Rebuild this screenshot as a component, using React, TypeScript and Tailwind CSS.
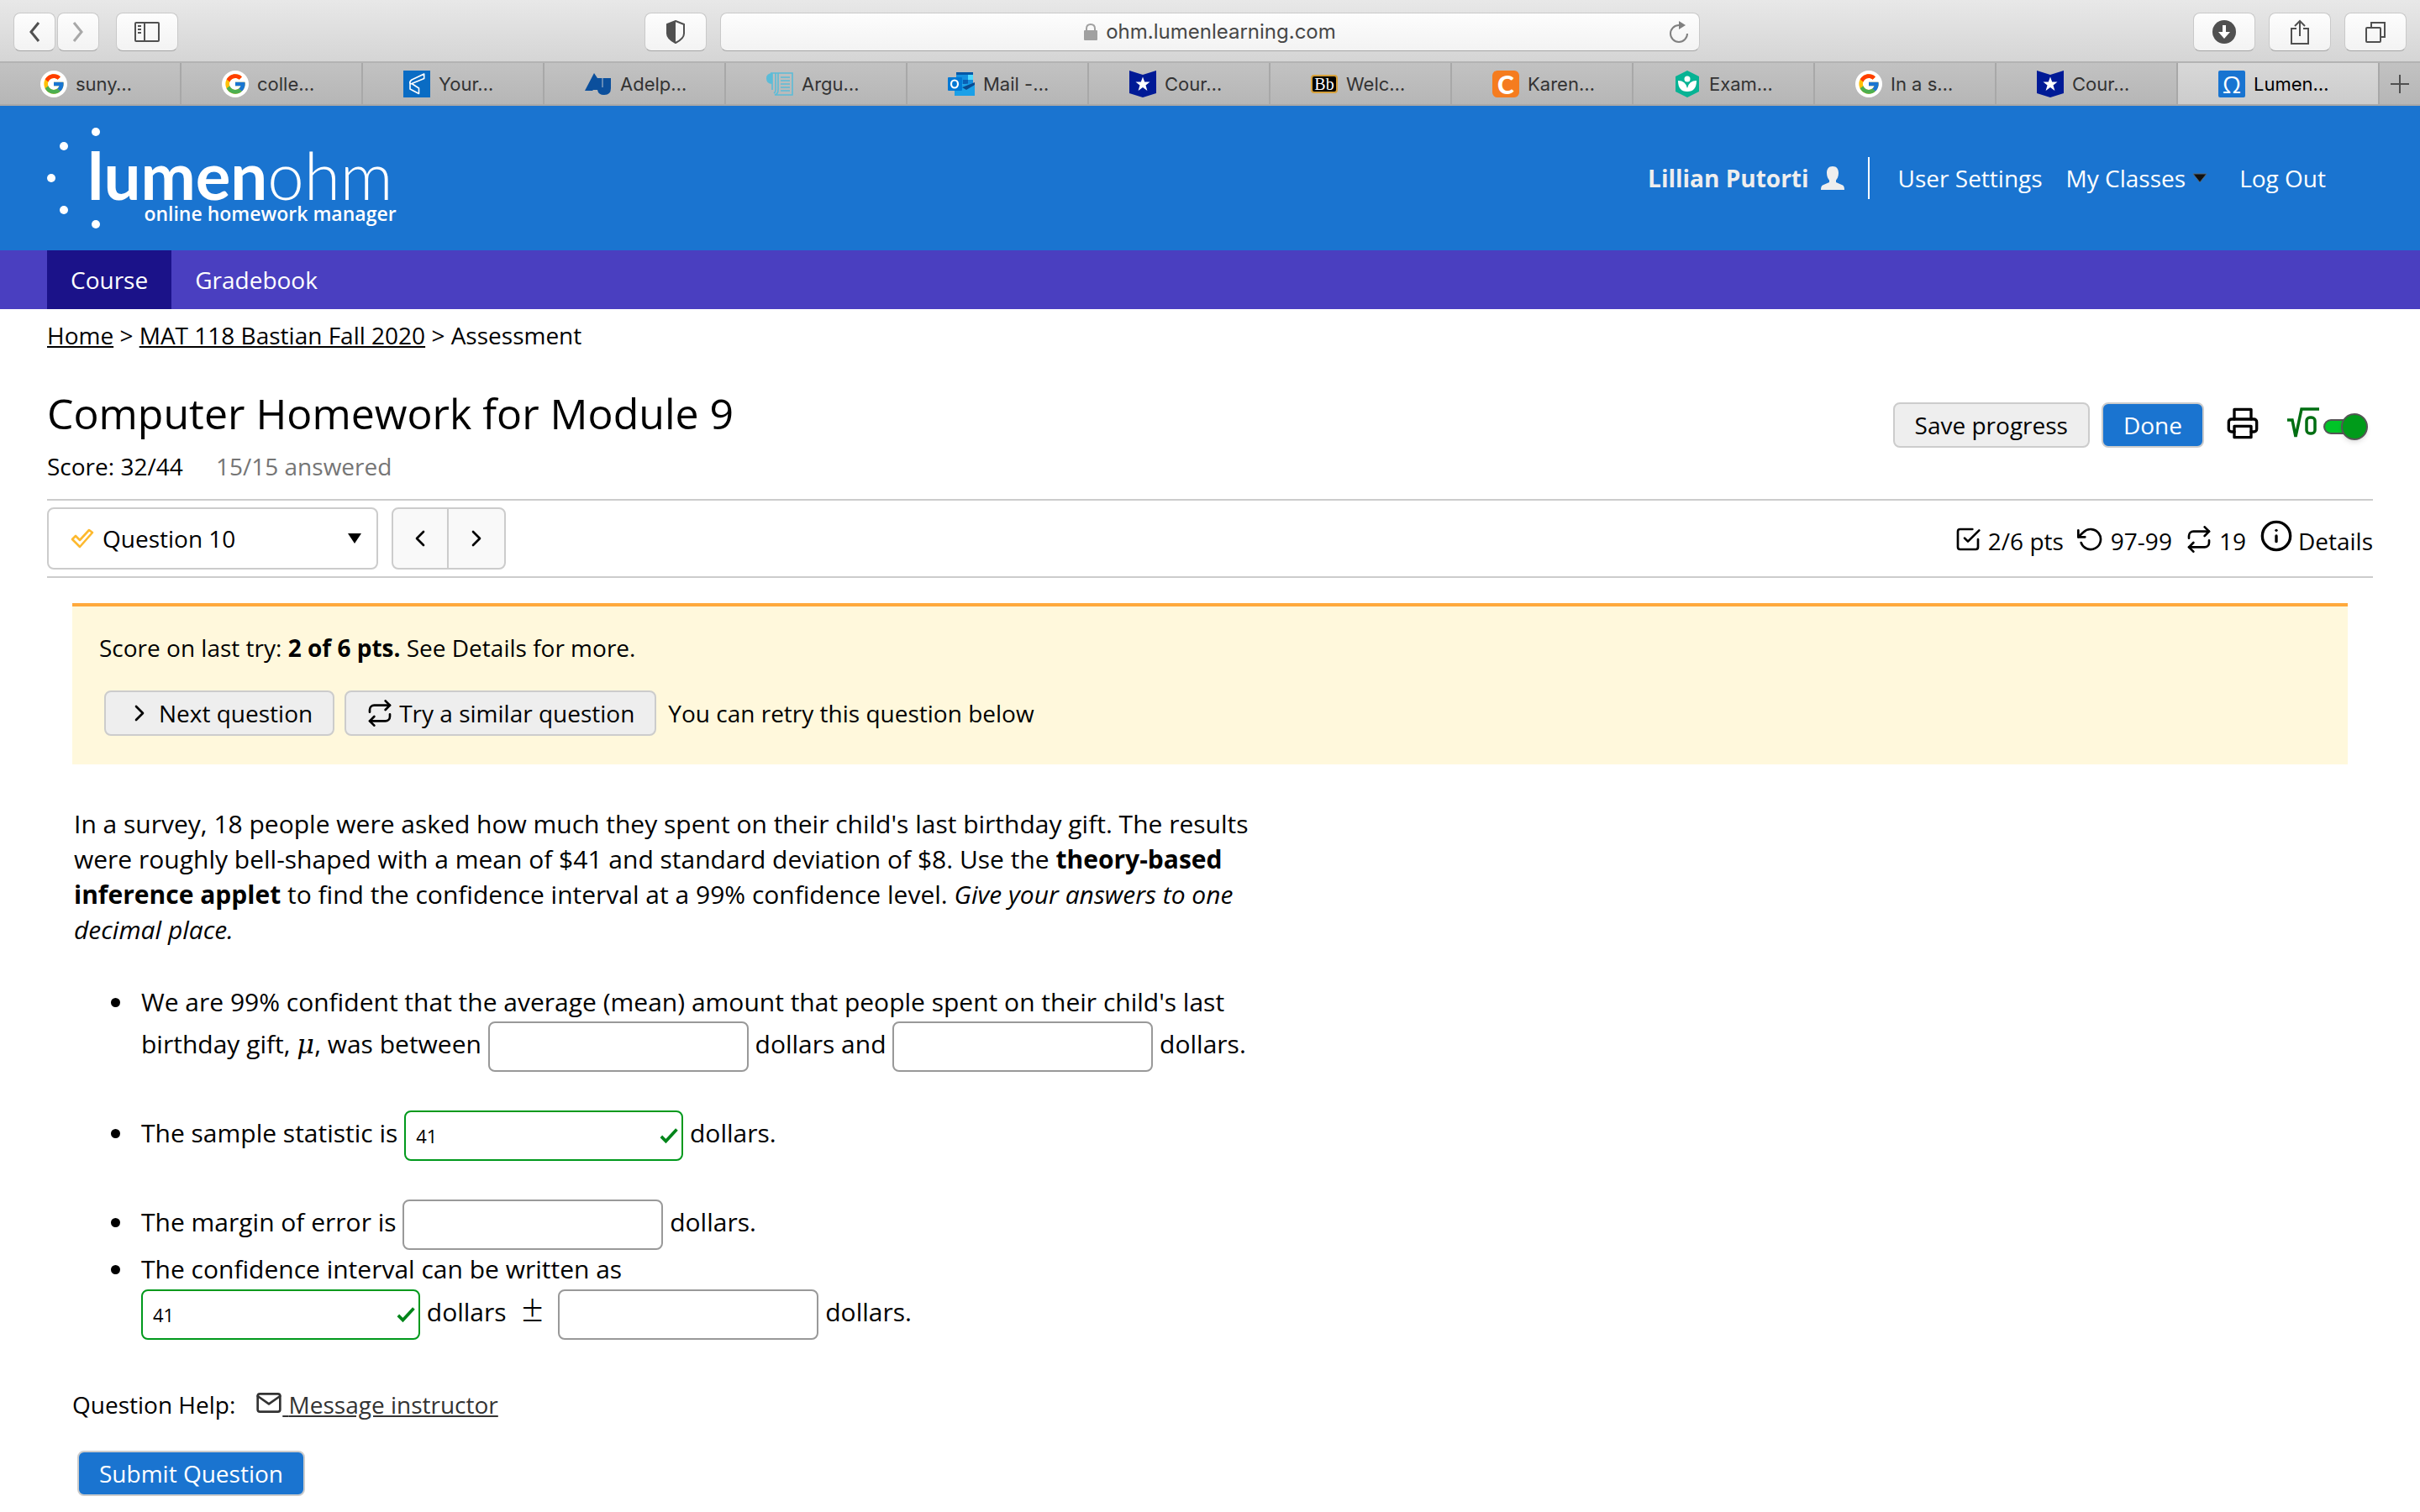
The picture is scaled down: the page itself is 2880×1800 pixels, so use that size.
import { FcGoogle } from 'react-icons/fc';
import {
    FiCheckSquare,
    FiChevronLeft,
    FiChevronRight,
    FiInfo,
    FiMail,
    FiPrinter,
    FiRepeat,
    FiRotateCcw,
} from 'react-icons/fi';

function GoogleIcon() {
    return (
        <span className="flex size-8 items-center justify-center rounded-full bg-white">
            <FcGoogle className="size-7" />
        </span>
    );
}

function RibbonIcon() {
    return (
        <svg viewBox="0 0 32 32" className="size-8">
            <path d="M0 0L16 5L32 0V27L16 32L0 27Z" fill="#001a96" />
            <path d="M16 7.500l2.200 6h6.300l-5 3.900 1.900 6.600-5.400-4-5.400 4 1.900-6.600-5-3.900h6.300z" fill="#fff" />
        </svg>
    );
}

function YourIcon() {
    return (
        <svg viewBox="0 0 32 32" className="size-8">
            <rect width="32" height="32" fill="#0a6cc4" />
            <path
                d="M24.700 4L10 11Q7 13 8 16V22L18.500 27.500V21L10 15.500L24.700 9.500ZM8 16L10 15.500"
                fill="none"
                stroke="#fff"
                strokeWidth="1.600"
                strokeLinejoin="round"
            />
        </svg>
    );
}

function AdelphiIcon() {
    return (
        <svg viewBox="0 0 32 32" className="size-8">
            <path d="M0 24L11 3l4 6h16v12q0 8-8 8-7 0-8-6h-5l-1 1z" fill="#0b4f9c" />
            <path d="M21 9v11" stroke="#b9c4d0" />
        </svg>
    );
}

function ScrollIcon() {
    return (
        <svg viewBox="0 0 32 32" className="size-8" fill="none" stroke="#5bbcd8" strokeWidth="1.600">
            <path d="M7 3Q0 3 0 9.500T7 16z" fill="#5bbcd8" stroke="none" />
            <path d="M5 3h26v26H10q4-1 4-6V3M7 3v20M11 3v20q0 3-2 4" />
            <path d="M17 8h11M17 12h11M17 16h11M17 20h11M17 24h11" />
        </svg>
    );
}

function OutlookIcon() {
    return (
        <svg viewBox="0 0 32 32" className="size-8">
            <path d="M10 2h20v14H10z" fill="#1490df" />
            <path d="M10 2h20v3H10z" fill="#0358a7" />
            <path d="M24 5h6v6h-6z" fill="#50d9ff" />
            <path d="M18 11h6v5h-6z" fill="#0a5fb4" />
            <path d="M8 17l24-2v15H8z" fill="#1aa0e8" />
            <path d="M17 20l15-6v3l-10 6z" fill="#0a4a8f" />
            <rect y="8" width="17" height="16" rx="1" fill="#0078d4" />
            <ellipse cx="8" cy="16" rx="4" ry="4.500" fill="none" stroke="#fff" strokeWidth="2.200" />
        </svg>
    );
}

function BlackboardIcon() {
    return (
        <span className="flex h-[22px] w-8 items-center justify-center rounded-sm border-2 border-[#d6a03a] bg-black font-['Liberation_Serif',serif] text-[20px] leading-none text-white">
            Bb
        </span>
    );
}

function CheggIcon() {
    return (
        <span className="flex size-8 items-center justify-center rounded-md bg-[#f57c1f] font-['Lato',sans-serif] text-[30px] leading-none font-black text-white">
            C
        </span>
    );
}

function ExamIcon() {
    return (
        <svg viewBox="0 0 32 32" className="size-8">
            <path d="M16 0l14 7v18l-14 7-14-7V7z" fill="#07b394" />
            <circle cx="16" cy="10" r="3.500" fill="#fff" />
            <path d="M5 12q9 0 11 9 2-9 11-9 0 13-11 13T5 12z" fill="#fff" />
        </svg>
    );
}

function OhmIcon() {
    return (
        <span className="flex size-8 items-center justify-center rounded-xs bg-[#1874d1] font-['Open_Sans',sans-serif] text-[28px] leading-none text-white">
            Ω
        </span>
    );
}

const tabs = [
    { label: 'suny…', icon: <GoogleIcon /> },
    { label: 'colle…', icon: <GoogleIcon /> },
    { label: 'Your…', icon: <YourIcon /> },
    { label: 'Adelp…', icon: <AdelphiIcon /> },
    { label: 'Argu…', icon: <ScrollIcon /> },
    { label: 'Mail -…', icon: <OutlookIcon /> },
    { label: 'Cour…', icon: <RibbonIcon /> },
    { label: 'Welc…', icon: <BlackboardIcon /> },
    { label: 'Karen…', icon: <CheggIcon /> },
    { label: 'Exam…', icon: <ExamIcon /> },
    { label: 'In a s…', icon: <GoogleIcon /> },
    { label: 'Cour…', icon: <RibbonIcon /> },
];

const toolButton =
    'flex h-[46px] items-center justify-center rounded-lg border border-[#c9c9c9] border-b-[#a5a5a5] bg-linear-to-b from-[#fdfdfd] to-[#f3f3f3] text-[#505050]';

function Toolbar() {
    return (
        <div className="grid h-[75px] grid-cols-[857fr_1166fr_857fr] items-center border-b-2 border-[#b3b3b3] bg-linear-to-b from-[#e8e8e8] to-[#d5d5d5] pt-0.5 font-['Inter',sans-serif]">
            <div className="flex items-center justify-between px-4">
                <div className="flex items-center">
                    <button aria-label="Back" className={`${toolButton} w-[50px]`}>
                        <svg viewBox="0 0 14 26" className="h-[26px] w-3.5" fill="none" stroke="currentColor" strokeWidth="3">
                            <path d="M12 2L3 13l9 11" />
                        </svg>
                    </button>
                    <button aria-label="Forward" className={`${toolButton} ml-0.5 w-[50px]`}>
                        <svg viewBox="0 0 14 26" className="h-[26px] w-3.5" fill="none" stroke="#a8a8a8" strokeWidth="3">
                            <path d="M2 2l9 11-9 11" />
                        </svg>
                    </button>
                    <button aria-label="Sidebar" className={`${toolButton} ml-5 w-[74px]`}>
                        <svg viewBox="0 0 30 26" className="h-[26px] w-[30px]" fill="none" stroke="currentColor" strokeWidth="2">
                            <rect x="1" y="2" width="28" height="22" rx="1" />
                            <path d="M12 2v22M4 6h4M4 10h4M4 14h4" />
                        </svg>
                    </button>
                </div>
                <button aria-label="Privacy report" className={`${toolButton} w-[74px]`}>
                    <svg viewBox="0 0 24 28" className="h-7 w-6">
                        <path d="M12 1l10 4v11q0 6-10 11Q2 22 2 16V5z" fill="none" stroke="currentColor" strokeWidth="2" />
                        <path d="M12 1v26Q2 22 2 16V5z" fill="currentColor" />
                    </svg>
                </button>
            </div>
            <div className={`${toolButton} relative gap-2.5`}>
                <svg viewBox="0 0 16 20" className="h-5 w-4">
                    <path d="M3 9V6q0-5 5-5t5 5v3" fill="none" stroke="#a0a0a0" strokeWidth="2" />
                    <rect y="8" width="16" height="12" rx="1" fill="#a0a0a0" />
                </svg>
                <span className="text-[24px] leading-8 text-[#474747]">ohm.lumenlearning.com</span>
                <button aria-label="Reload" className="absolute right-3 text-[#808080]">
                    <svg viewBox="0 0 24 28" className="h-7 w-6" fill="none" stroke="currentColor" strokeWidth="2">
                        <path d="M12 6A10 10 0 1 0 22 16" />
                        <path d="M12 1l8 5-8 5z" fill="currentColor" stroke="none" />
                    </svg>
                </button>
            </div>
            <div className="flex items-center justify-end gap-4 pr-4">
                <button aria-label="Downloads" className={`${toolButton} w-[74px]`}>
                    <svg viewBox="0 0 28 28" className="size-7">
                        <circle cx="14" cy="14" r="14" fill="currentColor" />
                        <path d="M12 6h4v8h5l-7 8-7-8h5z" fill="#fff" />
                    </svg>
                </button>
                <button aria-label="Share" className={`${toolButton} w-[74px]`}>
                    <svg viewBox="0 0 24 30" className="h-[30px] w-6" fill="none" stroke="currentColor" strokeWidth="2">
                        <path d="M8 11H2v18h20V11h-6M12 20V2M6 8l6-6 6 6" />
                    </svg>
                </button>
                <button aria-label="Show tabs" className={`${toolButton} w-[74px]`}>
                    <svg viewBox="0 0 26 26" className="size-[26px]" fill="none" stroke="currentColor" strokeWidth="2">
                        <rect x="2" y="8" width="17" height="17" rx="1" />
                        <path d="M8 8V2h16v17h-5" />
                    </svg>
                </button>
            </div>
        </div>
    );
}

function TabBar() {
    return (
        <div className="grid h-[51px] grid-cols-[repeat(12,18fr)_20fr_48px] border-b-2 border-[#a8a8a8] bg-linear-to-b from-[#c2c2c2] to-[#b6b6b6] font-['Inter',sans-serif] text-[22px] text-[#333]">
            {tabs.map((tab, i) => (
                <a key={i} href="#" className="flex min-w-0 items-center gap-2.5 border-r-2 border-[#a8a8a8] pl-12 whitespace-nowrap">
                    {tab.icon}
                    {tab.label}
                </a>
            ))}
            <a href="#" className="flex min-w-0 items-center gap-2.5 border-r-2 border-[#a8a8a8] bg-linear-to-b from-[#d8d8d8] to-[#cccccc] pl-12 whitespace-nowrap text-black">
                <OhmIcon />
                Lumen…
            </a>
            <button aria-label="New tab" className="flex items-center justify-center">
                <svg viewBox="0 0 24 24" className="size-6" stroke="#505050" strokeWidth="2">
                    <path d="M12 1v22M1 12h22" />
                </svg>
            </button>
        </div>
    );
}

function Logo() {
    return (
        <a href="#" className="flex text-white">
            <svg viewBox="0 0 64 124" className="h-[124px] w-16" fill="currentColor">
                <circle cx="58" cy="7" r="5" />
                <circle cx="20" cy="24" r="5" />
                <circle cx="5" cy="62" r="5" />
                <circle cx="20" cy="100" r="5" />
                <circle cx="58" cy="117" r="5" />
            </svg>
            <span className="-ml-4 flex flex-col items-end pt-6 font-['Lato',sans-serif]">
                <span className="mr-1 flex text-[78px] leading-[68px]">
                    <span className="font-bold">lumen</span>
                    <span className="font-light">ohm</span>
                </span>
                <span className="font-['Open_Sans',sans-serif] text-[23px] leading-6 font-semibold">online homework manager</span>
            </span>
        </a>
    );
}

function Header() {
    return (
        <header className="flex h-[172px] items-center justify-between bg-[#1a74d0] pr-28 pl-14 text-white">
            <Logo />
            <div className="flex items-center">
                <a href="#" className="flex items-center gap-3.5 font-bold text-[#eeeeee]">
                    Lillian Putorti
                    <svg viewBox="0 0 28 28" className="size-7" fill="currentColor">
                        <path d="M14 0c5 0 7 3.500 7 8 0 4-1.500 7-3 8.500v2.500l8 3.500q2 1 2 5.500H0q0-4.500 2-5.500l8-3.500v-2.500C8.500 15 7 12 7 8c0-4.500 2-8 7-8z" />
                    </svg>
                </a>
                <div className="ml-7 h-[50px] w-0.5 bg-white" />
                <nav className="ml-[34px] flex items-center">
                    <a href="#">User Settings</a>
                    <a href="#" className="ml-7 flex items-center gap-2">
                        My Classes
                        <svg viewBox="0 0 18 12" className="h-3 w-[18px]">
                            <path d="M1 1h16l-8 10z" fill="#111" stroke="#5a6670" />
                        </svg>
                    </a>
                    <a href="#" className="ml-[38px]">Log Out</a>
                </nav>
            </div>
        </header>
    );
}

const grayButton = 'flex h-[54px] items-center rounded-lg border-2 border-[#cccccc] bg-[#eeeeee]';
const blueButton = 'flex h-[54px] items-center rounded-lg border-2 border-[#cccccc] bg-[#1a74d0] text-white';

function TitleBar() {
    return (
        <div className="flex items-start justify-between">
            <div>
                <h1 className="text-[50px] leading-[68px]">Computer Homework for Module 9</h1>
                <p className="mt-2.5 leading-[38px]">
                    Score: 32/44 <span className="ml-8 text-[#757575]">15/15 answered</span>
                </p>
            </div>
            <div className="mt-[21px] flex items-center">
                <button className={`${grayButton} px-6`}>Save progress</button>
                <button className={`${blueButton} ml-3.5 px-6`}>Done</button>
                <button aria-label="Print" className="mb-1 ml-[26px]">
                    <FiPrinter className="size-10" />
                </button>
                <label className="ml-8 flex items-center gap-1 pr-1.5">
                    <svg viewBox="0 0 40 38" className="mb-1 h-[38px] w-10" fill="none" stroke="#006e12" strokeWidth="3.500">
                        <path d="M1 15h6l4 20L18 2h21" />
                        <rect x="24" y="12" width="10" height="19" rx="4" />
                    </svg>
                    <span className="relative mt-1 flex h-8 w-[53px] items-center">
                        <input type="checkbox" role="switch" defaultChecked aria-label="Math entry" className="absolute size-full opacity-0" />
                        <span className="h-[18px] w-10 rounded-full border-2 border-[#555] bg-[#00c428]" />
                        <span className="absolute right-0 size-8 rounded-full border-2 border-[#555] bg-[#009b1a] shadow-md" />
                    </span>
                </label>
            </div>
        </div>
    );
}

function QuestionBar() {
    return (
        <div className="mt-5 flex items-center justify-between border-y-2 border-[#cccccc] py-2">
            <div className="flex gap-4">
                <div className="flex h-[74px] w-[394px] items-center rounded-lg border-2 border-[#cccccc] pr-[18px] pl-[26px]">
                    <svg viewBox="0 0 28 24" className="h-6 w-7" fill="none" stroke="#fdb92e" strokeWidth="2.600" strokeLinejoin="round">
                        <path d="M2 13l4-4 5 5L22 2l4 3-15 17z" />
                    </svg>
                    <select aria-label="Question" className="h-full flex-1 appearance-none bg-transparent pl-2.5 outline-none">
                        <option>Question 10</option>
                    </select>
                    <svg viewBox="0 0 16 12" className="pointer-events-none h-3 w-4">
                        <path d="M0 0h16L8 12z" />
                    </svg>
                </div>
                <div className="flex h-[74px] rounded-lg border-2 border-[#cccccc] bg-[#f9f9f9]">
                    <button aria-label="Previous question" className="flex w-[66px] items-center justify-center border-r-2 border-[#cccccc]">
                        <FiChevronLeft className="size-8" />
                    </button>
                    <button aria-label="Next question" className="flex w-[66px] items-center justify-center">
                        <FiChevronRight className="size-8" />
                    </button>
                </div>
            </div>
            <ul className="flex items-baseline gap-4">
                <li>
                    <FiCheckSquare className="mr-2 inline size-8 align-[-3px]" />
                    2/6 pts
                </li>
                <li>
                    <FiRotateCcw className="mr-2 inline size-8 align-[-3px]" />
                    97-99
                </li>
                <li>
                    <FiRepeat className="mr-2 inline size-8 align-[-3px]" />
                    19
                </li>
                <li>
                    <a href="#">
                        <FiInfo className="mr-1.5 inline size-10 align-[-3px]" />
                        Details
                    </a>
                </li>
            </ul>
        </div>
    );
}

function LastTry() {
    return (
        <section className="mx-[30px] mt-[30px] border-t-4 border-[#ffa93c] bg-[#fff8dc] px-8 pt-[30px] pb-[34px]">
            <p className="leading-[38px]">
                Score on last try: <strong>2 of 6 pts.</strong> See Details for more.
            </p>
            <div className="mt-8 flex items-center pl-1.5">
                <button className={`${grayButton} gap-[7px] px-6`}>
                    <FiChevronRight className="size-8" />
                    Next question
                </button>
                <button className={`${grayButton} ml-3 gap-[7px] px-6`}>
                    <FiRepeat className="size-8" />
                    Try a similar question
                </button>
                <span className="ml-3.5">You can retry this question below</span>
            </div>
        </section>
    );
}

function Blank({ label }: { label: string }) {
    return (
        <input
            type="text"
            aria-label={label}
            className="my-0.5 h-[60px] w-[310px] rounded-lg border-2 border-[#999] px-3 align-middle text-[22px]"
        />
    );
}

function Correct({ label }: { label: string }) {
    return (
        <span className="my-0.5 inline-flex h-[60px] w-[332px] items-center rounded-lg border-2 border-[#00991c] pr-1 align-middle">
            <input type="text" aria-label={label} defaultValue="41" className="h-full w-full bg-transparent pl-3 text-[22px] outline-none" />
            <svg viewBox="0 0 24 20" className="h-5 w-6" fill="none" stroke="#00851a" strokeWidth="4">
                <path d="M2 11l6 6L22 2" />
            </svg>
        </span>
    );
}

function Question() {
    return (
        <section className="mt-[50px] ml-8 max-w-[1420px] text-[30px] leading-[42px]">
            <p>
                In a survey, 18 people were asked how much they spent on their child's last birthday gift. The results were
                roughly bell-shaped with a mean of $41 and standard deviation of $8. Use the{' '}
                <strong>theory-based inference applet</strong> to find the confidence interval at a 99% confidence level.{' '}
                <em>Give your answers to one decimal place.</em>
            </p>
            <ul className="mt-11 list-disc pl-[72px]">
                <li className="pl-2">
                    We are 99% confident that the average (mean) amount that people spent on their child's last birthday gift,{' '}
                    <span className="font-['DejaVu_Serif',serif] text-[32px] leading-none italic">μ</span>, was between <Blank label="Lower bound" /> dollars and{' '}
                    <Blank label="Upper bound" /> dollars.
                </li>
                <li className="mt-[42px] pl-2">
                    The sample statistic is <Correct label="Sample statistic" /> dollars.
                </li>
                <li className="mt-[42px] pl-2">
                    The margin of error is <Blank label="Margin of error" /> dollars.
                </li>
                <li className="pl-2">
                    The confidence interval can be written as
                    <br />
                    <Correct label="Center of interval" /> dollars{' '}
                    <span className="mx-2.5 font-['Open_Sans',sans-serif] text-[46px] leading-none font-light">±</span>{' '}
                    <Blank label="Half width" /> dollars.
                </li>
            </ul>
        </section>
    );
}

export default function App() {
    return (
        <div className="min-h-screen bg-white font-['Open_Sans',sans-serif] text-[28px] leading-[42px] text-black">
            <Toolbar />
            <TabBar />
            <Header />
            <nav className="flex h-[70px] bg-[#4a3fc0] pl-14 text-white">
                <a href="#" className="flex items-center bg-[#1b1289] px-7">
                    Course
                </a>
                <a href="#" className="flex items-center px-7">
                    Gradebook
                </a>
            </nav>
            <main className="px-14 pt-3">
                <nav className="mb-10 leading-[38px]">
                    <a href="#" className="underline">Home</a> &gt;{' '}
                    <a href="#" className="underline">MAT 118 Bastian Fall 2020</a> &gt; Assessment
                </nav>
                <TitleBar />
                <QuestionBar />
                <LastTry />
                <Question />
                <p className="mt-[54px] ml-[30px]">
                    Question Help:
                    <FiMail className="ml-6 inline size-8 align-[-3px] text-[#333]" />
                    <a href="#" className="text-[#333] underline">
                        {' '}
                        Message instructor
                    </a>
                </p>
                <button className={`${blueButton} mt-[34px] ml-9 px-6`}>Submit Question</button>
            </main>
        </div>
    );
}
